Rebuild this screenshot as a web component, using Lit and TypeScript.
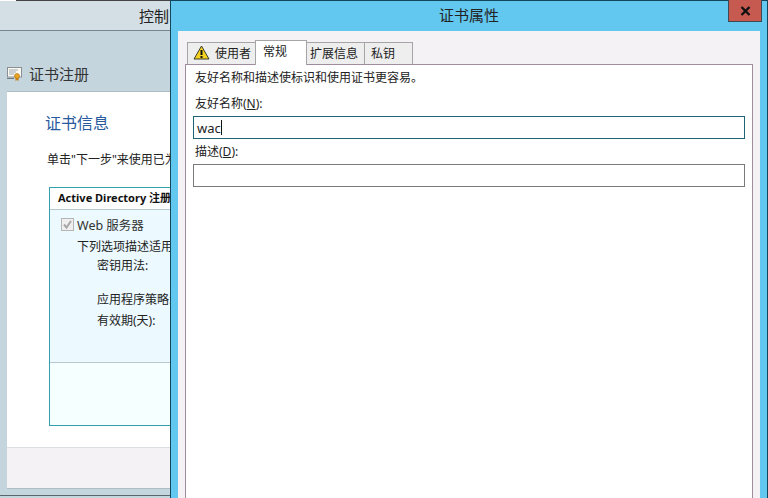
import { LitElement, html, css } from "lit";
import { customElement } from "lit/decorators.js";

@customElement("app-root")
export class AppRoot extends LitElement {
  static styles = css`
    :host {
      display: block;
      position: relative;
      width: 768px;
      height: 498px;
      overflow: hidden;
      font-family: "Noto Sans", "Noto Sans CJK SC", sans-serif;
      font-size: 12px;
      color: #222;
      background: #c5d5dd;
    }
    .back { display: flex; flex-direction: column; width: 170px; height: 498px; }
    .topline { height: 1px; flex: none; background: linear-gradient(to right, #fff 16px, #444 16px); }
    .head {
      height: 30px; flex: none; box-sizing: border-box; border-bottom: 1px solid #77858c;
      background: #d3dfe4; display: flex; justify-content: flex-end; align-items: center;
      font-size: 15px; color: #222; white-space: nowrap; overflow: hidden;
    }
    .head span { margin-right: 1px; }
    .wiz-title { height: 60px; flex: none; box-sizing: border-box; padding: 25px 0 0 7px; display: flex; align-items: center; gap: 7px; font-size: 15px; color: #333; }
    .wiz-title svg { flex: none; }
    .page { flex: none; margin-left: 7px; height: 398px; background: #fff; display: flex; flex-direction: column; border-bottom: 1px solid #aebcc3; border-top: 1px solid #aebcc3; box-sizing: border-box; }
    .content { height: 355px; flex: none; box-sizing: border-box; padding: 20px 0 0 38px; overflow: hidden; white-space: nowrap; }
    .h1 { font-size: 16px; line-height: 22px; color: #2a5a9e; }
    .lead { margin: 17px 0 0 2px; line-height: 18px; font-size: 12px; color: #222; width: 123px; overflow: hidden; }
    .box {
      margin: 18px 0 0 4px; height: 239px; width: 121px; box-sizing: border-box;
      border-style: solid; border-width: 1px 0 1px 1px; border-color: #35a0ac; background: #f5ffff;
      display: flex; flex-direction: column; overflow: hidden;
    }
    .box-head { height: 22px; flex: none; box-sizing: border-box; border-bottom: 1px solid #b7c9cf; background: #fff; font-weight: 700; font-size: 11px; line-height: 20px; padding-left: 8px; color: #111; overflow: hidden; }
    .box-body { height: 153px; flex: none; box-sizing: border-box; border-bottom: 1px solid #b9c8cf; background: #ecf9fe; padding-left: 11px; overflow: hidden; }
    .check { display: flex; align-items: center; gap: 3px; height: 18px; margin-top: 5px; font-size: 12.5px; color: #333; }
    .cb { width: 11px; height: 11px; border: 1px solid #b5b5b5; background: #efefef; display: flex; flex: none; }
    .l1 { margin: 5px 0 0 16px; line-height: 18px; }
    .l2 { margin-left: 36px; line-height: 18px; }
    .l2.a { margin-top: 1px; }
    .l2.b { margin-top: 16px; }
    .l2.c { margin-top: 3px; }
    .footer { flex: 1; background: #f5f2f5; border-top: 1px solid #dcdfe2; }
    .bottom { flex: none; margin-top: 6px; height: 1px; background: #5a666c; }

    .dialog {
      position: absolute; left: 170px; top: 0; width: 598px; height: 498px;
      box-sizing: border-box; border-left: 1px solid #12465c; border-right: 1px solid #12465c; border-top: 1px solid #12465c;
      background: #63c8ef; display: flex; flex-direction: column;
    }
    .title { height: 30px; box-sizing: border-box; padding-bottom: 4px; flex: none; display: flex; align-items: center; justify-content: center; font-size: 15px; color: #222; position: relative; }
    .close {
      position: absolute; top: -1px; right: 5px; width: 34px; height: 22px; box-sizing: border-box;
      background: #c75a50; border: 1px solid #3b4a55; border-top: 0; display: flex; align-items: center; justify-content: center;
    }
    .client {
      flex: 1; margin: 0 7px 0 7px; background: #f5f2f6; box-sizing: border-box; padding: 9px 7px 0 7px;
      display: flex; flex-direction: column; min-height: 0;
    }
    .tabs { display: flex; align-items: flex-end; height: 24px; flex: none; padding-left: 2px; position: relative; z-index: 1; }
    .tab {
      height: 22px; box-sizing: border-box; border: 1px solid #a5a5a5; border-bottom: 0; background: #eeeeee; flex: none;
      margin-left: -1px; padding: 0 6px 2px; display: flex; align-items: center; gap: 5px; white-space: nowrap; color: #222; font-size: 12px;
    }
    .tab svg { flex: none; }
    .tab.first { width: 69px; margin-left: 0; padding-left: 5px; padding-right: 0; }
    .tab.active { width: 52px; background: #fff; border-color: #a5a5a5; padding: 0 0 5px 7px; margin-bottom: -1px; height: 25px; }
    .tab.ext { width: 59px; padding-left: 3px; padding-right: 0; margin-left: -1px; }
    .tab.key { width: 49px; }
    .panel {
      flex: 1; background: #fff; border: 1px solid #9f8c9c; border-bottom: 0; box-sizing: border-box; padding: 0 7px; display: flex; flex-direction: column;
    }
    .t { line-height: 18px; color: #222; }
    .t u { text-underline-offset: 1px; }
    .desc { margin: 4px 0 0 2px; }
    .lab1 { margin: 8px 0 0 2px; }
    .lab2 { margin: 4px 0 0 2px; }
    .field { height: 23px; box-sizing: border-box; border: 1px solid #7a7a7a; background: #fff; flex: none; }
    .field.f { border-color: #1f6472; margin-top: 3px; display: flex; align-items: center; padding-left: 3px; font-size: 13px; color: #222; }
    .field.g { margin-top: 3px; }
    .caret { width: 1px; height: 15px; background: #111; }
  `;

  render() {
    return html`
      <div class="back">
        <div class="topline"></div>
        <div class="head"><span>控制</span></div>
        <div class="wiz-title">
          <svg width="15" height="14" viewBox="0 0 15 14">
            <rect x="0.5" y="0.5" width="14" height="9.5" fill="#fbf9ef" stroke="#8b8f94"/>
            <path d="M2 3h9M2 5h7M2 7h5" stroke="#9aa7b5"/>
            <path d="M0 11h7v1H0z" fill="#6c7a84"/>
            <path d="M8.5 10v4l1.5-1 1.5 1v-4" fill="#c97f12"/>
            <circle cx="10" cy="9" r="2.5" fill="#eaa61e" stroke="#a96f10" stroke-width=".6"/>
          </svg>
          <span>证书注册</span>
        </div>
        <div class="page">
          <div class="content">
            <div class="h1">证书信息</div>
            <div class="lead">单击"下一步"来使用已为</div>
            <div class="box">
              <div class="box-head">Active Directory 注册</div>
              <div class="box-body">
                <div class="check">
                  <span class="cb">
                    <svg width="11" height="11" viewBox="0 0 11 11"><path d="M2 5.5l2.5 3L9 2" fill="none" stroke="#a8a8a8" stroke-width="2"/></svg>
                  </span>
                  <span>Web 服务器</span>
                </div>
                <div class="l1">下列选项描述适用</div>
                <div class="l2 a">密钥用法:</div>
                <div class="l2 b">应用程序策略:</div>
                <div class="l2 c">有效期(天):</div>
              </div>
            </div>
          </div>
          <div class="footer"></div>
        </div>
        <div class="bottom"></div>
      </div>
      <div class="dialog">
        <div class="title">
          证书属性
          <div class="close">
            <svg width="11" height="10" viewBox="0 0 11 10"><path d="M1.5 1l8 8M9.5 1l-8 8" stroke="#111" stroke-width="2.4"/></svg>
          </div>
        </div>
        <div class="client">
          <div class="tabs">
            <div class="tab first">
              <svg width="17" height="15" viewBox="0 0 17 15">
                <path d="M8.5 1L16 14H1z" fill="#f4d21f" stroke="#3a3a2a" stroke-linejoin="round"/>
                <path d="M8.5 5v5" stroke="#111" stroke-width="2"/><rect x="7.5" y="11" width="2" height="2" fill="#111"/>
              </svg>
              <span>使用者</span>
            </div>
            <div class="tab active">常规</div>
            <div class="tab ext">扩展信息</div>
            <div class="tab key">私钥</div>
          </div>
          <div class="panel">
            <div class="t desc">友好名称和描述使标识和使用证书更容易。</div>
            <div class="t lab1">友好名称(<u>N</u>):</div>
            <div class="field f">wac<span class="caret"></span></div>
            <div class="t lab2">描述(<u>D</u>):</div>
            <div class="field g"></div>
          </div>
        </div>
      </div>
    `;
  }
}
